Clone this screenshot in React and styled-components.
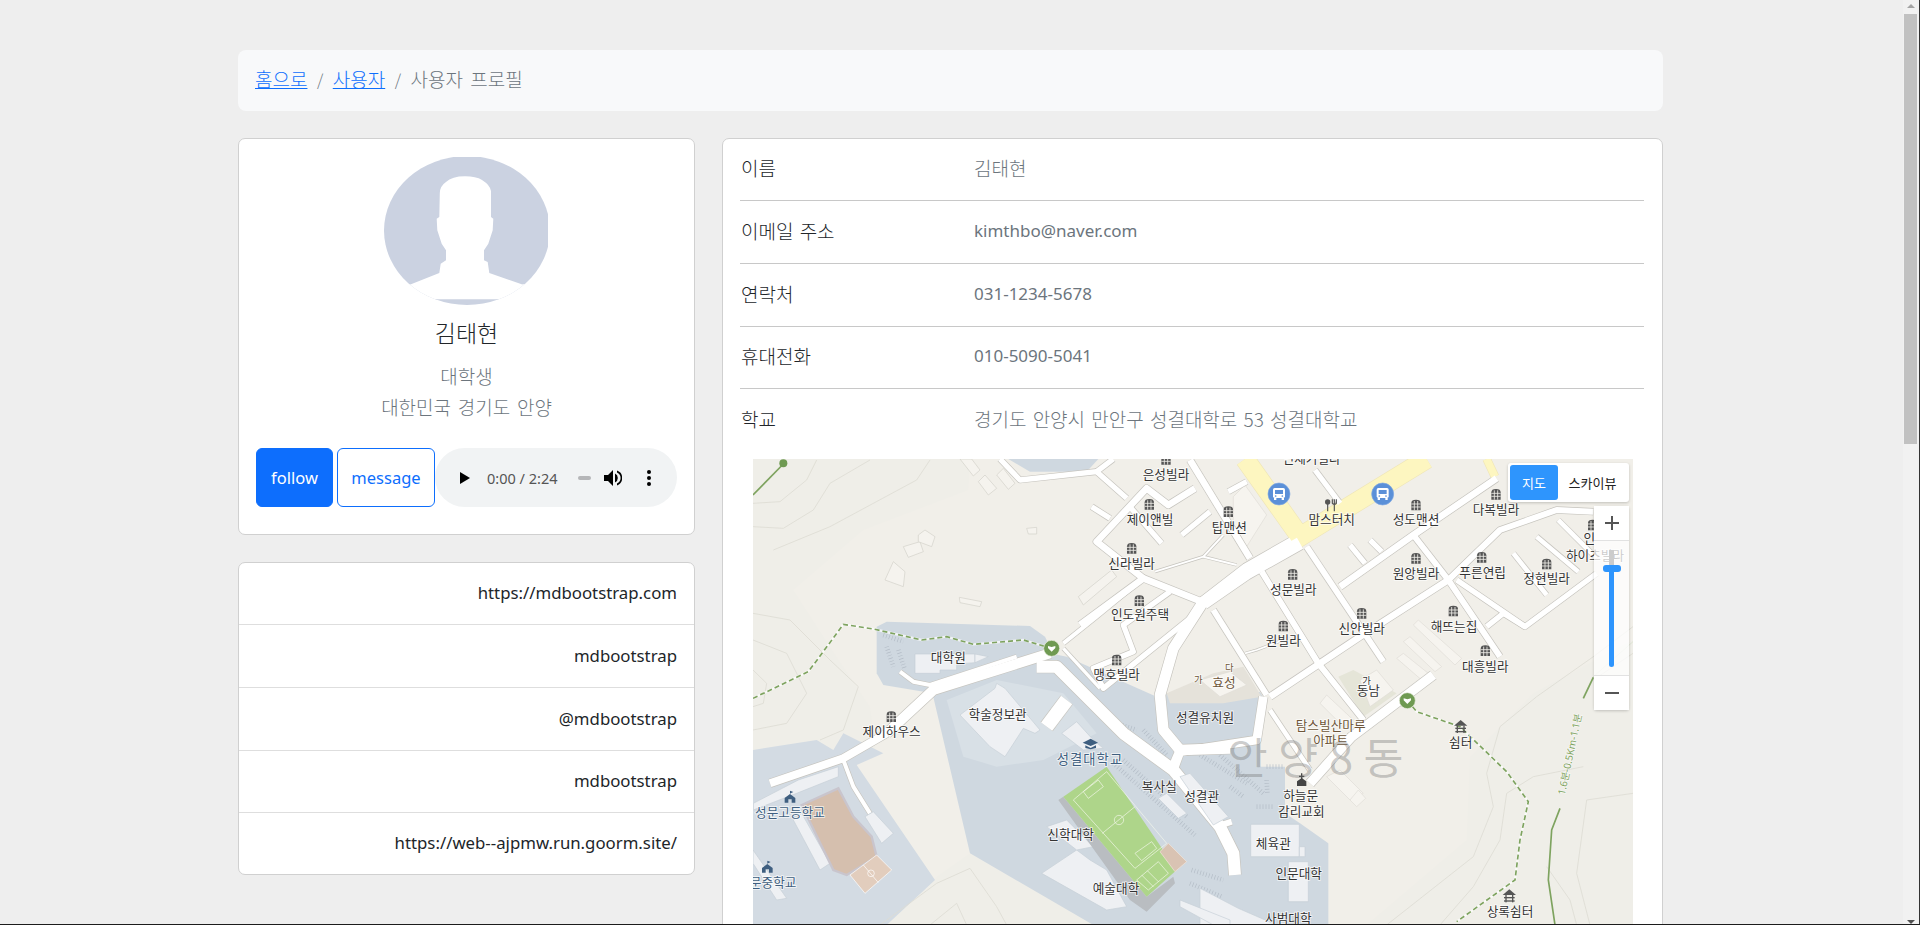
import React from 'react';
import styled, { createGlobalStyle } from 'styled-components';

const KR = '"Noto Sans CJK KR", sans-serif';
const LATIN = '"Noto Sans", "Noto Sans CJK KR", sans-serif';

const Global = createGlobalStyle`
  html, body {
    margin: 0;
    height: 100%;
    overflow: hidden;
    background: #eee;
    font-family: ${LATIN};
    color: #212529;
  }
`;

const LEFT_TILE = 'translate(730 440) scale(0.33333)';
const RIGHT_TILE = 'translate(1200 440) scale(0.33333)';

// map data is in 3x crop coordinates, one set for each half of the map
const leftAreas = [
  ['#efeee8', '69,57 720,57 715,150 400,270 190,450 300,620 420,800 440,950 69,950'],
  ['#efeee8', '470,1455 620,1310 720,1240 1090,1455'],
  ['#cfd8e0', '440,560 470,545 900,558 945,590 970,640 620,760 590,757 460,735 440,700'],
  ['#cfd8e0', '605,750 960,640 1010,650 1280,770 1320,760 1420,770 1590,756 1605,780 1590,900 1590,980 1665,980 1665,1120 1710,1150 1795,1210 1795,1455 1090,1455 720,1240'],
  ['#d8e0e6', '650,780 800,720 1000,760 1100,880 940,960 800,980 700,950'],
  ['#d3dbe3', '69,930 260,900 310,930 340,880 460,940 380,975 615,1320 470,1455 69,1455'],
  ['#cfd8e0', '835,57 1105,57 1070,95 900,95'],
  ['#e5e2da', '1310,760 1450,700 1540,680 1595,770 1480,790 1320,790'],
];

const rightAreas = [
  ['#efeee8', '1299,600 1000,760 810,950 800,1200 500,1455 1299,1455'],
  ['#e5e5d8', '415,710 460,690 590,760 490,830'],
];

const contours = [
  'M69,260 L160,265 L250,210 L300,130 L420,60',
  'M69,190 L150,185 L230,120 L260,60',
  'M69,520 L180,540 L300,660 L385,740 L340,870 L270,900',
  'M69,600 L170,640 L230,760 L170,850 L69,870',
  'M69,690 L110,730 L100,790 L69,800',
  'M450,1455 L620,1330 L720,1285 L800,1400 L830,1455',
  'M600,1455 L680,1390 L710,1455',
  'M130,330 L300,260 L560,120 L600,60',
];

const rightContours = [
  'M1299,560 L1180,650 L1010,770 L900,860 L860,1000 L880,1100 L820,1250 L560,1455',
  'M1150,980 L1000,1010 L920,1060 L900,1200 L820,1340 L720,1455',
  'M1299,1060 L1160,1080 L1130,1300 L1170,1455',
  'M1040,1280 L1110,1380 L1130,1455',
  'M1299,640 L1180,720',
];

const parking = [
  '460,585 520,605',
  '470,620 490,680',
  '505,630 525,690',
  '1100,785 1140,830',
  '1160,850 1220,870',
  '1240,870 1310,945',
  '1150,970 1400,1190',
  '1180,960 1370,1130',
  '1385,1290 1480,1320',
  '1380,1330 1475,1370',
  '1410,945 1550,1030',
  '1470,945 1600,1060',
  '1500,1040 1540,1070',
  '1610,980 1660,980',
  '1610,1020 1612,1060',
  '1580,1100 1630,1100',
];

const leftRoads = [
  [24, '120,1030 340,955 470,880'],
  [30, '470,880 610,750 960,640'],
  [12, '1000,610 1100,530 1240,415'],
  [12, '340,960 370,1040 420,1120'],
  [12, '510,695 550,725 600,735 860,650'],
  [36, '920,680 980,680 1180,880 1330,990 1470,1160 1510,1240 1515,1305'],
  [42, '1010,780 950,860'],
  [18, '1460,1160 1505,1145'],
  [32, '1690,305 1550,385 1420,485 1330,625 1290,765 1300,870 1350,930 1500,925'],
  [26, '1350,930 1320,1000'],
  [20, '1050,555 1240,415 1415,485'],
  [20, '1240,415 1100,305 1250,145 1315,195 1395,145'],
  [16, '1085,200 1140,235'],
  [16, '1190,175 1100,95 870,120 810,57'],
  [16, '1100,95 1150,57'],
  [16, '1195,195 1295,310'],
  [16, '1355,285 1440,215'],
  [20, '1380,60 1560,355'],
  [6, '1275,395 1420,350 1480,285'],
  [6, '1420,350 1520,375'],
  [16, '1320,455 1180,555 1210,635 1090,685 1120,745 1380,535'],
  [10, '1000,625 1110,745'],
];

const rightRoads = [
  [38, '300,310 140,400 10,490'],
  [18, '320,320 550,665'],
  [20, '420,440 640,285 890,115'],
  [20, '210,770 480,590 745,420'],
  [18, '640,285 745,420 900,650'],
  [18, '745,420 900,270 1070,210 1180,215'],
  [16, '345,90 420,190'],
  [18, '40,510 200,765'],
  [18, '185,395 355,670 490,840'],
  [26, '190,770 170,900 -60,935 -80,990'],
  [14, '210,810 330,990'],
  [28, '330,1030 455,890 700,705'],
  [16, '770,420 975,560 1190,400'],
  [16, '860,560 910,520 975,560'],
  [14, '940,340 1040,465'],
  [14, '1010,290 1135,395'],
  [14, '1075,240 1190,355'],
  [16, '450,315 495,370'],
  [16, '510,300 545,335'],
  [16, '85,155 140,125'],
  [5, '135,640 170,630 250,600'],
];

const leftBuildings = [
  '555,642 735,642 735,668 680,672 680,690 630,690 630,700 555,700',
  '735,642 775,650 735,668',
  '690,825 795,745 800,730 825,745 930,870 915,880 880,865 825,950 780,920',
  '995,880 1040,845 1090,900 1120,925 1060,930',
  '1310,1060 1370,1120 1345,1135 1285,1075',
  '1350,1010 1380,1000 1495,1130 1450,1155',
  '935,1300 1040,1230 1080,1260 1130,1290 1190,1400 1130,1410',
  '950,1160 1010,1140 1090,1220 1040,1230',
  '405,1130 430,1115 490,1180 455,1210',
  '190,1140 215,1120 300,1270 270,1290',
  '70,1090 205,1020 325,980 325,1010 200,1060 70,1110',
  '69,1230 170,1375 140,1380 69,1270',
  '1350,1380 1500,1440 1500,1455 1450,1455 1350,1400',
];

const rightBuildings = [
  '152,1153 298,1153 298,1250 152,1250',
  '298,1220 315,1220 315,1250 298,1250',
  '265,1265 325,1265 325,1385 265,1385',
  '0,1345 115,1405 230,1455 0,1455',
];

const hillBuildings = [
  '520,320 570,305 580,335 535,352',
  '565,285 585,270 615,290 605,320 565,305',
  '465,420 490,365 525,395 520,440',
  '890,265 920,262 920,282 895,282',
  '688,472 755,485 750,500 690,488',
  '690,57 725,57 750,90 730,108',
  '745,125 765,105 800,145 775,165',
  '800,105 820,85 855,130 835,148',
  '1045,470 1145,390 1160,410 1060,495',
];

const rightCream = [
  '640,555 655,540 785,655 765,675',
  '610,605 630,590 725,680 705,695',
  '590,655 610,640 685,700 665,720',
  '100,170 135,135 200,225 140,320 100,250',
  '380,1010 420,990 490,1060 450,1080',
  '450,1080 475,1050 497,1075 470,1100',
  '360,790 380,765 460,840 430,860',
  '0,720 90,695 140,735 60,770',
  '480,720 530,690 580,750 510,800',
];

const leftLabels = [
  ['은성빌라', 1308, 116],
  ['제이앤빌', 1260, 251],
  ['신라빌라', 1205, 384],
  ['인도원주택', 1230, 538],
  ['맹호빌라', 1160, 717],
  ['대학원', 655, 666],
  ['학술정보관', 803, 838],
  ['제이하우스', 485, 888],
  ['복사실', 1288, 1053],
  ['성결관', 1415, 1083],
  ['신학대학', 1022, 1198],
  ['예술대학', 1158, 1358],
  ['성결유치원', 1425, 846],
  ['성문고등학교', 180, 1132, 'blue'],
  ['성문중학교', 112, 1341, 'blue'],
  ['가', 1405, 730, 'brown', 28],
];

const rightLabels = [
  ['인제기빌라', 335, 70],
  ['맘스터치', 395, 253],
  ['성도맨션', 648, 253],
  ['탑맨션', 88, 275],
  ['다복빌라', 888, 222],
  ['원앙빌라', 648, 414],
  ['푸른연립', 848, 412],
  ['정현빌라', 1040, 430],
  ['인', 1168, 310],
  ['하이츠빌라', 1185, 359],
  ['성문빌라', 280, 462],
  ['신안빌라', 485, 578],
  ['원빌라', 250, 616],
  ['해뜨는집', 762, 572],
  ['대흥빌라', 856, 692],
  ['동남', 505, 764],
  ['가', 500, 732, 'dark', 28],
  ['효성', 72, 742, 'brown'],
  ['다', 88, 693, 'brown', 28],
  ['탐스빌산마루', 392, 869, 'brown'],
  ['아파트', 392, 916, 'brown'],
  ['쉼터', 782, 921],
  ['상록쉼터', 930, 1428],
  ['하늘문', 302, 1081],
  ['감리교회', 304, 1127],
  ['체육관', 220, 1225],
  ['인문대학', 296, 1315],
  ['사범대학', 265, 1448],
];

const leftHouses = [[1308, 58], [1258, 193], [1205, 325], [1228, 482], [1160, 660], [484, 830]];
const rightHouses = [
  [85, 215], [648, 195], [888, 163], [648, 355], [845, 352], [1040, 372],
  [1178, 255], [278, 403], [485, 520], [250, 558], [760, 513], [856, 632],
];

const socials = [
  { text: 'https://mdbootstrap.com', height: 62 },
  { text: 'mdbootstrap', height: 63 },
  { text: '@mdbootstrap', height: 63 },
  { text: 'mdbootstrap', height: 62 },
  { text: 'https://web--ajpmw.run.goorm.site/', height: 61 },
];

const details = [
  { label: '이름', value: '김태현', korean: true, height: 62, pad: 15 },
  { label: '이메일 주소', value: 'kimthbo@naver.com', height: 63, pad: 16 },
  { label: '연락처', value: '031-1234-5678', height: 63, pad: 16 },
  { label: '휴대전화', value: '010-5090-5041', height: 62, pad: 15 },
  { label: '학교', value: '경기도 안양시 만안구 성결대학로 53 성결대학교', korean: true, height: 70, pad: 16, last: true },
];

const App = () => (
  <>
    <Global />
    <Container>
      <Breadcrumb>
        <Crumb href="#">홈으로</Crumb>
        <Slash>/</Slash>
        <Crumb href="#">사용자</Crumb>
        <Slash>/</Slash>
        <Current>사용자 프로필</Current>
      </Breadcrumb>
      <Columns>
        <LeftColumn>
          <ProfileCard>
            <AvatarFrame>
              <Avatar />
            </AvatarFrame>
            <Name>김태현</Name>
            <Muted>대학생</Muted>
            <Muted>대한민국 경기도 안양</Muted>
            <Actions>
              <FollowButton>follow</FollowButton>
              <MessageButton>message</MessageButton>
              <AudioBar />
            </Actions>
          </ProfileCard>
          <SocialCard>
            {socials.map((s, i) => (
              <SocialRow key={i} $height={s.height}>{s.text}</SocialRow>
            ))}
          </SocialCard>
        </LeftColumn>
        <DetailCard>
          {details.map((d) => (
            <DetailRow key={d.label} $height={d.height} $pad={d.pad} $last={d.last}>
              <DetailLabel>{d.label}</DetailLabel>
              <DetailValue $korean={d.korean}>{d.value}</DetailValue>
            </DetailRow>
          ))}
          <MapBox>
            <MapDrawing />
            <MapTypes>
              <MapTypeActive>지도</MapTypeActive>
              <MapType>스카이뷰</MapType>
            </MapTypes>
            <ZoomControl>
              <ZoomButton>
                <svg width="14" height="14" viewBox="0 0 14 14"><path d="M6 0h2v6h6v2H8v6H6V8H0V6h6z" fill="#555" /></svg>
              </ZoomButton>
              <ZoomTrack>
                <ZoomRail />
                <ZoomFill />
                <ZoomThumb />
              </ZoomTrack>
              <ZoomButton>
                <svg width="14" height="14" viewBox="0 0 14 14"><path d="M0 6h14v2H0z" fill="#555" /></svg>
              </ZoomButton>
            </ZoomControl>
          </MapBox>
        </DetailCard>
      </Columns>
    </Container>
    <Scrollbar>
      <ScrollArrowUp />
      <ScrollThumb />
      <ScrollArrowDown />
    </Scrollbar>
    <BottomEdge />
  </>
);

const Avatar = () => (
  <svg width="164" height="148" viewBox="0 0 164 148" style={{ display: 'block' }}>
    <defs>
      <clipPath id="avatarClip">
        <ellipse cx="83" cy="73.5" rx="83" ry="74.5" />
      </clipPath>
    </defs>
    <g clipPath="url(#avatarClip)">
      <rect width="164" height="148" fill="#cbd2e1" />
      <path
        d="M81 19.3 Q68 19.3 62 25 Q56 29 55.8 36 L55.3 60 L52.7 61.7 L53.3 73.3 L57.7 86.7 L62 93.3 L62 103.3 L56.7 106.7 L55.3 116 L27 127.3 L0 145 L0 142.3 L164 142.3 L164 145 L137.7 127.3 L105.3 116 L103.7 105 L100 103.3 L100 93.3 L104.3 86.7 L108.7 73.3 L109.3 61.7 L107 60 L107 34 Q106 28 98 23 Q92 19.3 81 19.3 Z"
        fill="#fff"
      />
      <path d="M0 127L27 127.3L0 145Z M164 127L137.7 127.3L164 145Z" fill="#fff" />
    </g>
  </svg>
);

const AudioBar = () => (
  <Audio>
    <svg width="10" height="12" viewBox="0 0 10 12"><path d="M0 0l10 6-10 6z" fill="#000" /></svg>
    <AudioTime>0:00 / 2:24</AudioTime>
    <AudioSlot />
    <svg width="18" height="18" viewBox="0 0 18 18">
      <path d="M0 6h4l5-5v16l-5-5H0z" fill="#000" />
      <path d="M11 4.5a5 5 0 0 1 0 9zM13 1.5a8 8 0 0 1 0 15v-2a6 6 0 0 0 0-11z" fill="#000" />
    </svg>
    <svg width="4" height="16" viewBox="0 0 4 16">
      <circle cx="2" cy="2" r="2" fill="#000" />
      <circle cx="2" cy="8" r="2" fill="#000" />
      <circle cx="2" cy="14" r="2" fill="#000" />
    </svg>
  </Audio>
);

const House = ({ x, y }) => (
  <g transform={`translate(${x} ${y})`}>
    <path d="M-14 16V-6Q-14-16 0-16Q14-16 14-6V16Z" fill="#555" />
    <path d="M-5-12V16M5-12V16M-14-3H14M-14 6H14" stroke="#f1efe9" strokeWidth="2.5" />
  </g>
);

const Bus = ({ x, y }) => (
  <g transform={`translate(${x} ${y})`}>
    <circle r="33" fill="#5b90d8" stroke="#7ea8e2" strokeWidth="2" />
    <rect x="-18" y="-18" width="36" height="30" rx="5" fill="#fff" />
    <rect x="-12" y="-12" width="24" height="12" fill="#5b90d8" />
    <rect x="-15" y="12" width="7" height="6" fill="#fff" />
    <rect x="8" y="12" width="7" height="6" fill="#fff" />
    <circle cx="-10" cy="6" r="2.5" fill="#5b90d8" />
    <circle cx="10" cy="6" r="2.5" fill="#5b90d8" />
  </g>
);

const TrailMarker = ({ x, y }) => (
  <g transform={`translate(${x} ${y})`}>
    <circle r="24" fill="#6f9a52" stroke="#eef0e6" strokeWidth="2" />
    <path d="M-11-7L0-4L11-7V-1L0 10L-11-1Z" fill="#fff" />
  </g>
);

const Pavilion = ({ x, y }) => (
  <g transform={`translate(${x} ${y})`} fill="#555">
    <path d="M-20-3L0-20L20-3Z" />
    <rect x="-16" y="3" width="32" height="4" />
    <rect x="-16" y="13" width="32" height="4" />
    <rect x="-12" y="-3" width="4" height="22" />
    <rect x="8" y="-3" width="4" height="22" />
  </g>
);

const School = ({ x, y }) => (
  <g transform={`translate(${x} ${y})`} fill="#3f5f80">
    <path d="M-16 16V2L0-10L16 2V16H5V6H-5V16Z" />
    <path d="M0-10V-20L10-16L2-12Z" />
  </g>
);

const Trail = ({ points }) => (
  <>
    <polyline points={points} fill="none" stroke="#fff" strokeWidth="7" opacity="0.7" />
    <polyline points={points} fill="none" stroke="#7ea35f" strokeWidth="5" strokeDasharray="15 9" />
  </>
);

const RoadPass = ({ roads, casing }) =>
  roads.map(([w, pts], i) => (
    <polyline
      key={i}
      points={pts}
      fill="none"
      stroke={casing ? '#c6c4be' : '#fff'}
      strokeWidth={casing ? w + 4 : w}
      strokeLinejoin="round"
    />
  ));

const Areas = ({ list }) => list.map(([fill, pts], i) => <polygon key={i} points={pts} fill={fill} />);

const Blocks = ({ list, fill, line }) =>
  list.map((pts, i) => <polygon key={i} points={pts} fill={fill} stroke={line} strokeWidth="2" />);

const Labels = ({ list }) =>
  list.map(([text, x, y, tone, size], i) => (
    <MapLabel key={i} x={x} y={y} $tone={tone} $size={size}>
      {text}
    </MapLabel>
  ));

const MapDrawing = () => (
  <svg width="880" height="466" viewBox="753 459 880 466" style={{ display: 'block' }}>
    <rect x="753" y="459" width="880" height="466" fill="#f1efe9" />
    <g transform={LEFT_TILE}>
      <Areas list={leftAreas} />
      {contours.map((d) => (
        <path key={d} d={d} fill="none" stroke="#dddcd4" strokeWidth="2.5" />
      ))}
      {parking.map((pts) => (
        <polyline key={pts} points={pts} fill="none" stroke="#b3bcc6" strokeWidth="14" strokeDasharray="2 7" />
      ))}
    </g>
    <g transform={RIGHT_TILE}>
      <Areas list={rightAreas} />
      {rightContours.map((d) => (
        <path key={d} d={d} fill="none" stroke="#dddcd4" strokeWidth="2.5" />
      ))}
      <Blocks list={rightCream} fill="#f6f4ef" line="#dfddd6" />
    </g>
    <g transform={LEFT_TILE}>
      <Blocks list={hillBuildings} fill="#f5f3ee" line="#d2d0c8" />
      <RoadPass roads={leftRoads} casing />
    </g>
    <g transform={RIGHT_TILE}>
      <polyline points="135,57 215,170 300,290 680,57" fill="none" stroke="#efe6b8" strokeWidth="60" />
      <polyline points="860,57 885,110" fill="none" stroke="#efe6b8" strokeWidth="26" />
      <RoadPass roads={rightRoads} casing />
    </g>
    <g transform={LEFT_TILE}>
      <RoadPass roads={leftRoads} />
    </g>
    <g transform={RIGHT_TILE}>
      <polyline points="135,57 215,170 300,290 680,57" fill="none" stroke="#fdf6c0" strokeWidth="56" />
      <polyline points="860,57 885,110" fill="none" stroke="#fdf6c0" strokeWidth="22" />
      <RoadPass roads={rightRoads} />
      <Blocks list={rightBuildings} fill="#eef0f3" line="#c6ced6" />
    </g>
    <g transform={LEFT_TILE}>
      <Blocks list={leftBuildings} fill="#eef0f3" line="#c6ced6" />
      {/* school ground and court */}
      <polygon points="215,1095 325,1045 370,1130 425,1190 440,1250 350,1305 310,1290" fill="#d5bfae" stroke="#c9c5cd" strokeWidth="7" />
      <polygon points="360,1305 440,1245 485,1290 405,1360" fill="#e2cdbd" stroke="#fff" strokeWidth="2" />
      <path d="M400 1275L445 1328M423 1300m-10 0a10 10 0 1 0 20 0a10 10 0 1 0 -20 0" fill="none" stroke="#fff" strokeWidth="2" />
      {/* stadium */}
      <polygon points="985,1080 1000,1070 1250,1370 1330,1310 1335,1330 1250,1415 1200,1380" fill="#b9bdc1" />
      <polygon points="1000,1070 1130,980 1340,1290 1250,1370" fill="#aed58a" />
      <g fill="none" stroke="#f4f8ec" strokeWidth="2">
        <polygon points="1030,1080 1130,995 1310,1210 1215,1285" />
        <path d="M1117 1180L1215 1100" />
        <circle cx="1167" cy="1140" r="14" />
        <polygon points="1060,1055 1105,1020 1120,1040 1075,1075" />
        <polygon points="1215,1240 1265,1205 1280,1225 1235,1262" />
        <polygon points="1220,1320 1285,1265 1315,1300 1255,1350" />
        <path d="M1235 1305L1270 1340M1252 1292L1285 1325" />
      </g>
      <polygon points="1290,1235 1315,1210 1370,1265 1335,1295" fill="#d9c3b3" stroke="#f1e6dc" strokeWidth="2" />
      <Trail points="69,775 235,695 265,655 340,553 430,567 575,600 650,590 730,613 880,600 965,625" />
      <polyline points="69,165 160,72" fill="none" stroke="#7ea35f" strokeWidth="5" />
      <circle cx="160" cy="70" r="12" fill="#6f9a52" />
      <TrailMarker x={965} y={625} />
      {leftHouses.map(([x, y]) => (
        <House key={`${x}-${y}`} x={x} y={y} />
      ))}
      <School x={180} y={1072} />
      <School x={112} y={1282} />
      {/* graduation cap */}
      <path d="M1058 908L1082 896L1104 908L1082 918Z" fill="#3f5f80" />
      <path d="M1066 916V924L1082 928L1098 924V916L1082 924Z" fill="#3f5f80" />
      <Labels list={leftLabels} />
      <MapLabel x={1080} y={972} $tone="blue" $size={40} $spaced>성결대학교</MapLabel>
    </g>
    <g transform={RIGHT_TILE}>
      <Trail points="622,782 650,815 780,860 920,995 985,1085 960,1200 945,1320 770,1445" />
      <polyline points="1299,605 1180,710 1150,770" fill="none" stroke="#dfe5d4" strokeWidth="3" />
      <polyline points="1180,712 1150,775" fill="none" stroke="#7ea35f" strokeWidth="5" />
      <polyline points="1080,1105 1055,1170 1045,1320 1065,1455" fill="none" stroke="#7ea35f" strokeWidth="5" />
      <RouteText x={1120} y={945} transform="rotate(-78 1120 945)">1.6분-0.5Km-1.1분</RouteText>
      <Bus x={237} y={162} />
      <Bus x={548} y={162} />
      <g transform="translate(393 190)">
        <circle cx="-10" cy="-4" r="8" fill="#555" />
        <path d="M-10 0V24M10-12V24M4-12V0Q10 6 16 0V-12" fill="none" stroke="#555" strokeWidth="3.5" />
      </g>
      {rightHouses.map(([x, y]) => (
        <House key={`${x}-${y}`} x={x} y={y} />
      ))}
      <TrailMarker x={622} y={782} />
      <Pavilion x={782} y={860} />
      <Pavilion x={928} y={1368} />
      <g transform="translate(305 1020)" fill="#444">
        <path d="M-14 18V4L0-6L14 4V18Z" />
        <path d="M-2-20H2V-13H8V-9H2V-2H-2V-9H-8V-13H-2Z" />
      </g>
      <Labels list={rightLabels} />
      <AreaName x={363} y={1003}>안양8동</AreaName>
    </g>
  </svg>
);

const Container = styled.div`
  width: 1425px;
  margin-left: 238px;
  padding-top: 50px;
`;

const Breadcrumb = styled.nav`
  display: flex;
  align-items: center;
  box-sizing: border-box;
  height: 61px;
  padding: 0 17px 4px;
  margin-bottom: 27px;
  background: #f8f9fa;
  border-radius: 8px;
  font-family: ${KR};
  font-size: 19px;
  font-weight: 300;
`;

const Crumb = styled.a`
  color: #0d6efd;
  text-decoration: underline;
`;

const Slash = styled.span`
  margin: 0 9.5px;
  color: #6c757d;
  font-size: 16px;
`;

const Current = styled.span`
  color: #6c757d;
  word-spacing: 3px;
`;

const Columns = styled.div`
  display: flex;
  align-items: flex-start;
  gap: 27px;
`;

const LeftColumn = styled.div`
  display: flex;
  flex-direction: column;
  gap: 27px;
  width: 457px;
  flex: none;
`;

const Card = styled.section`
  box-sizing: border-box;
  background: #fff;
  border: 1px solid #d0d0d0;
  border-radius: 7px;
`;

const ProfileCard = styled(Card)`
  display: flex;
  flex-direction: column;
  align-items: center;
  height: 397px;
  padding: 18px 17px 0;
`;

const AvatarFrame = styled.div`
  margin-right: 1px;
`;

const Name = styled.h5`
  margin: 12px 0 13px;
  font-family: ${KR};
  font-size: 23px;
  font-weight: 300;
  line-height: 30px;
`;

const Muted = styled.p`
  margin: 0;
  font-family: ${KR};
  font-size: 19px;
  font-weight: 300;
  word-spacing: 2.5px;
  line-height: 31px;
  color: #6c757d;
`;

const Actions = styled.div`
  display: flex;
  align-self: stretch;
  height: 59px;
  margin-top: 26px;
`;

const ActionButton = styled.button`
  box-sizing: border-box;
  padding: 0;
  border: 1px solid #0d6efd;
  border-radius: 6px;
  font-family: ${LATIN};
  font-size: 16.5px;
`;

const FollowButton = styled(ActionButton)`
  width: 77px;
  margin-right: 4px;
  background: #0d6efd;
  color: #fff;
`;

const MessageButton = styled(ActionButton)`
  width: 98px;
  background: #fff;
  color: #0d6efd;
`;

const Audio = styled.div`
  display: flex;
  align-items: center;
  width: 242px;
  box-sizing: border-box;
  padding-left: 25px;
  background: #f1f3f4;
  border-radius: 30px;

  svg:nth-of-type(2) {
    margin-left: 13px;
  }
  svg:nth-of-type(3) {
    margin-left: 25px;
  }
`;

const AudioTime = styled.span`
  margin-left: 17px;
  width: 74px;
  font-size: 14.5px;
  color: #555;
  white-space: nowrap;
`;

const AudioSlot = styled.span`
  width: 13px;
  height: 4px;
  margin-left: 17px;
  background: #b5b6b8;
  border-radius: 2px;
`;

const SocialCard = styled(Card)`
  height: 313px;
`;

const SocialRow = styled.div`
  box-sizing: border-box;
  display: flex;
  align-items: center;
  justify-content: flex-end;
  height: ${(p) => p.$height}px;
  padding: 0 17px 2px;
  font-size: 16.8px;
  border-bottom: 1px solid #dedede;

  &:last-child {
    border-bottom: none;
  }
`;

const DetailCard = styled(Card)`
  width: 941px;
  height: 1000px;
  padding: 0 18px 0 17px;
`;

const DetailRow = styled.div`
  box-sizing: border-box;
  display: flex;
  align-items: flex-start;
  height: ${(p) => p.$height}px;
  padding-top: ${(p) => p.$pad}px;
  border-bottom: ${(p) => (p.$last ? 'none' : '1px solid #c8c8c8')};
`;

const DetailLabel = styled.div`
  width: 233px;
  padding-left: 1px;
  font-family: ${KR};
  font-size: 19px;
  font-weight: 300;
  word-spacing: 2px;
  line-height: 28px;
`;

const DetailValue = styled.div`
  font-family: ${(p) => (p.$korean ? KR : LATIN)};
  font-size: ${(p) => (p.$korean ? '19px' : '17px')};
  font-weight: ${(p) => (p.$korean ? 300 : 400)};
  word-spacing: ${(p) => (p.$korean ? '2px' : '0')};
  line-height: 28px;
  color: #6c757d;
`;

const MapBox = styled.div`
  position: relative;
  width: 880px;
  margin-left: 13px;
`;

const MapLabel = styled.text`
  font-family: ${KR};
  font-size: ${(p) => p.$size || 38}px;
  letter-spacing: ${(p) => (p.$spaced ? '3px' : '0')};
  text-anchor: middle;
  fill: ${(p) => (p.$tone === 'blue' ? '#3f5f80' : p.$tone === 'brown' ? '#6d5538' : '#333')};
  stroke: rgba(255, 255, 255, 0.75);
  stroke-width: 5px;
  paint-order: stroke;
`;

const AreaName = styled.text`
  font-family: ${KR};
  font-size: 130px;
  letter-spacing: 32px;
  text-anchor: middle;
  fill: rgba(110, 110, 110, 0.36);
`;

const RouteText = styled.text`
  font-family: ${LATIN};
  font-size: 30px;
  text-anchor: middle;
  fill: #7ea35f;
  stroke: rgba(255, 255, 255, 0.6);
  stroke-width: 4px;
  paint-order: stroke;
`;

const MapTypes = styled.div`
  position: absolute;
  top: 4px;
  right: 4px;
  display: flex;
  box-sizing: border-box;
  width: 121px;
  height: 39px;
  padding: 2px;
  background: #fff;
  border-radius: 3px;
  box-shadow: 0 1px 3px rgba(0, 0, 0, 0.2);
  font-family: ${KR};
  font-size: 13px;
`;

const MapType = styled.div`
  flex: 1;
  display: flex;
  align-items: center;
  justify-content: center;
  color: #222;
`;

const MapTypeActive = styled(MapType)`
  flex: none;
  width: 48px;
  background: #2e95fd;
  border-radius: 3px;
  color: #fff;
`;

const ZoomControl = styled.div`
  position: absolute;
  top: 47px;
  right: 4px;
  display: flex;
  flex-direction: column;
  width: 35px;
  height: 204px;
  border-radius: 3px;
  box-shadow: 0 1px 3px rgba(0, 0, 0, 0.2);
`;

const ZoomButton = styled.div`
  display: flex;
  align-items: center;
  justify-content: center;
  height: 34px;
  background: #fff;
`;

const ZoomTrack = styled.div`
  position: relative;
  flex: 1;
  background: rgba(255, 255, 255, 0.75);
  border-top: 1px solid #e2e2e2;
  border-bottom: 1px solid #e2e2e2;
`;

const ZoomRail = styled.div`
  position: absolute;
  top: 9px;
  left: 15px;
  width: 5px;
  height: 20px;
  background: #ccc;
`;

const ZoomFill = styled.div`
  position: absolute;
  top: 27px;
  left: 15px;
  width: 5px;
  height: 99px;
  background: #2e95fd;
  border-radius: 0 0 3px 3px;
`;

const ZoomThumb = styled.div`
  position: absolute;
  top: 24px;
  left: 9px;
  width: 18px;
  height: 7px;
  background: #2e95fd;
  border-radius: 3px;
`;

const Scrollbar = styled.div`
  position: fixed;
  top: 0;
  right: 1px;
  bottom: 0;
  width: 16px;
  background: #f1f1f1;
  border-right: 1px solid #333;
  margin-right: -1px;
`;

const ScrollThumb = styled.div`
  position: absolute;
  top: 14px;
  left: 1px;
  width: 13px;
  height: 430px;
  background: #c1c1c1;
`;

const ScrollArrowUp = styled.div`
  position: absolute;
  top: 4px;
  left: 4px;
  border-left: 4px solid transparent;
  border-right: 4px solid transparent;
  border-bottom: 4px solid #a3a3a3;
`;

const ScrollArrowDown = styled.div`
  position: absolute;
  bottom: 1px;
  left: 4px;
  border-left: 4px solid transparent;
  border-right: 4px solid transparent;
  border-top: 4px solid #505050;
`;

const BottomEdge = styled.div`
  position: fixed;
  left: 0;
  right: 0;
  bottom: 0;
  height: 1px;
  background: #1c1c1c;
`;

export default App;
